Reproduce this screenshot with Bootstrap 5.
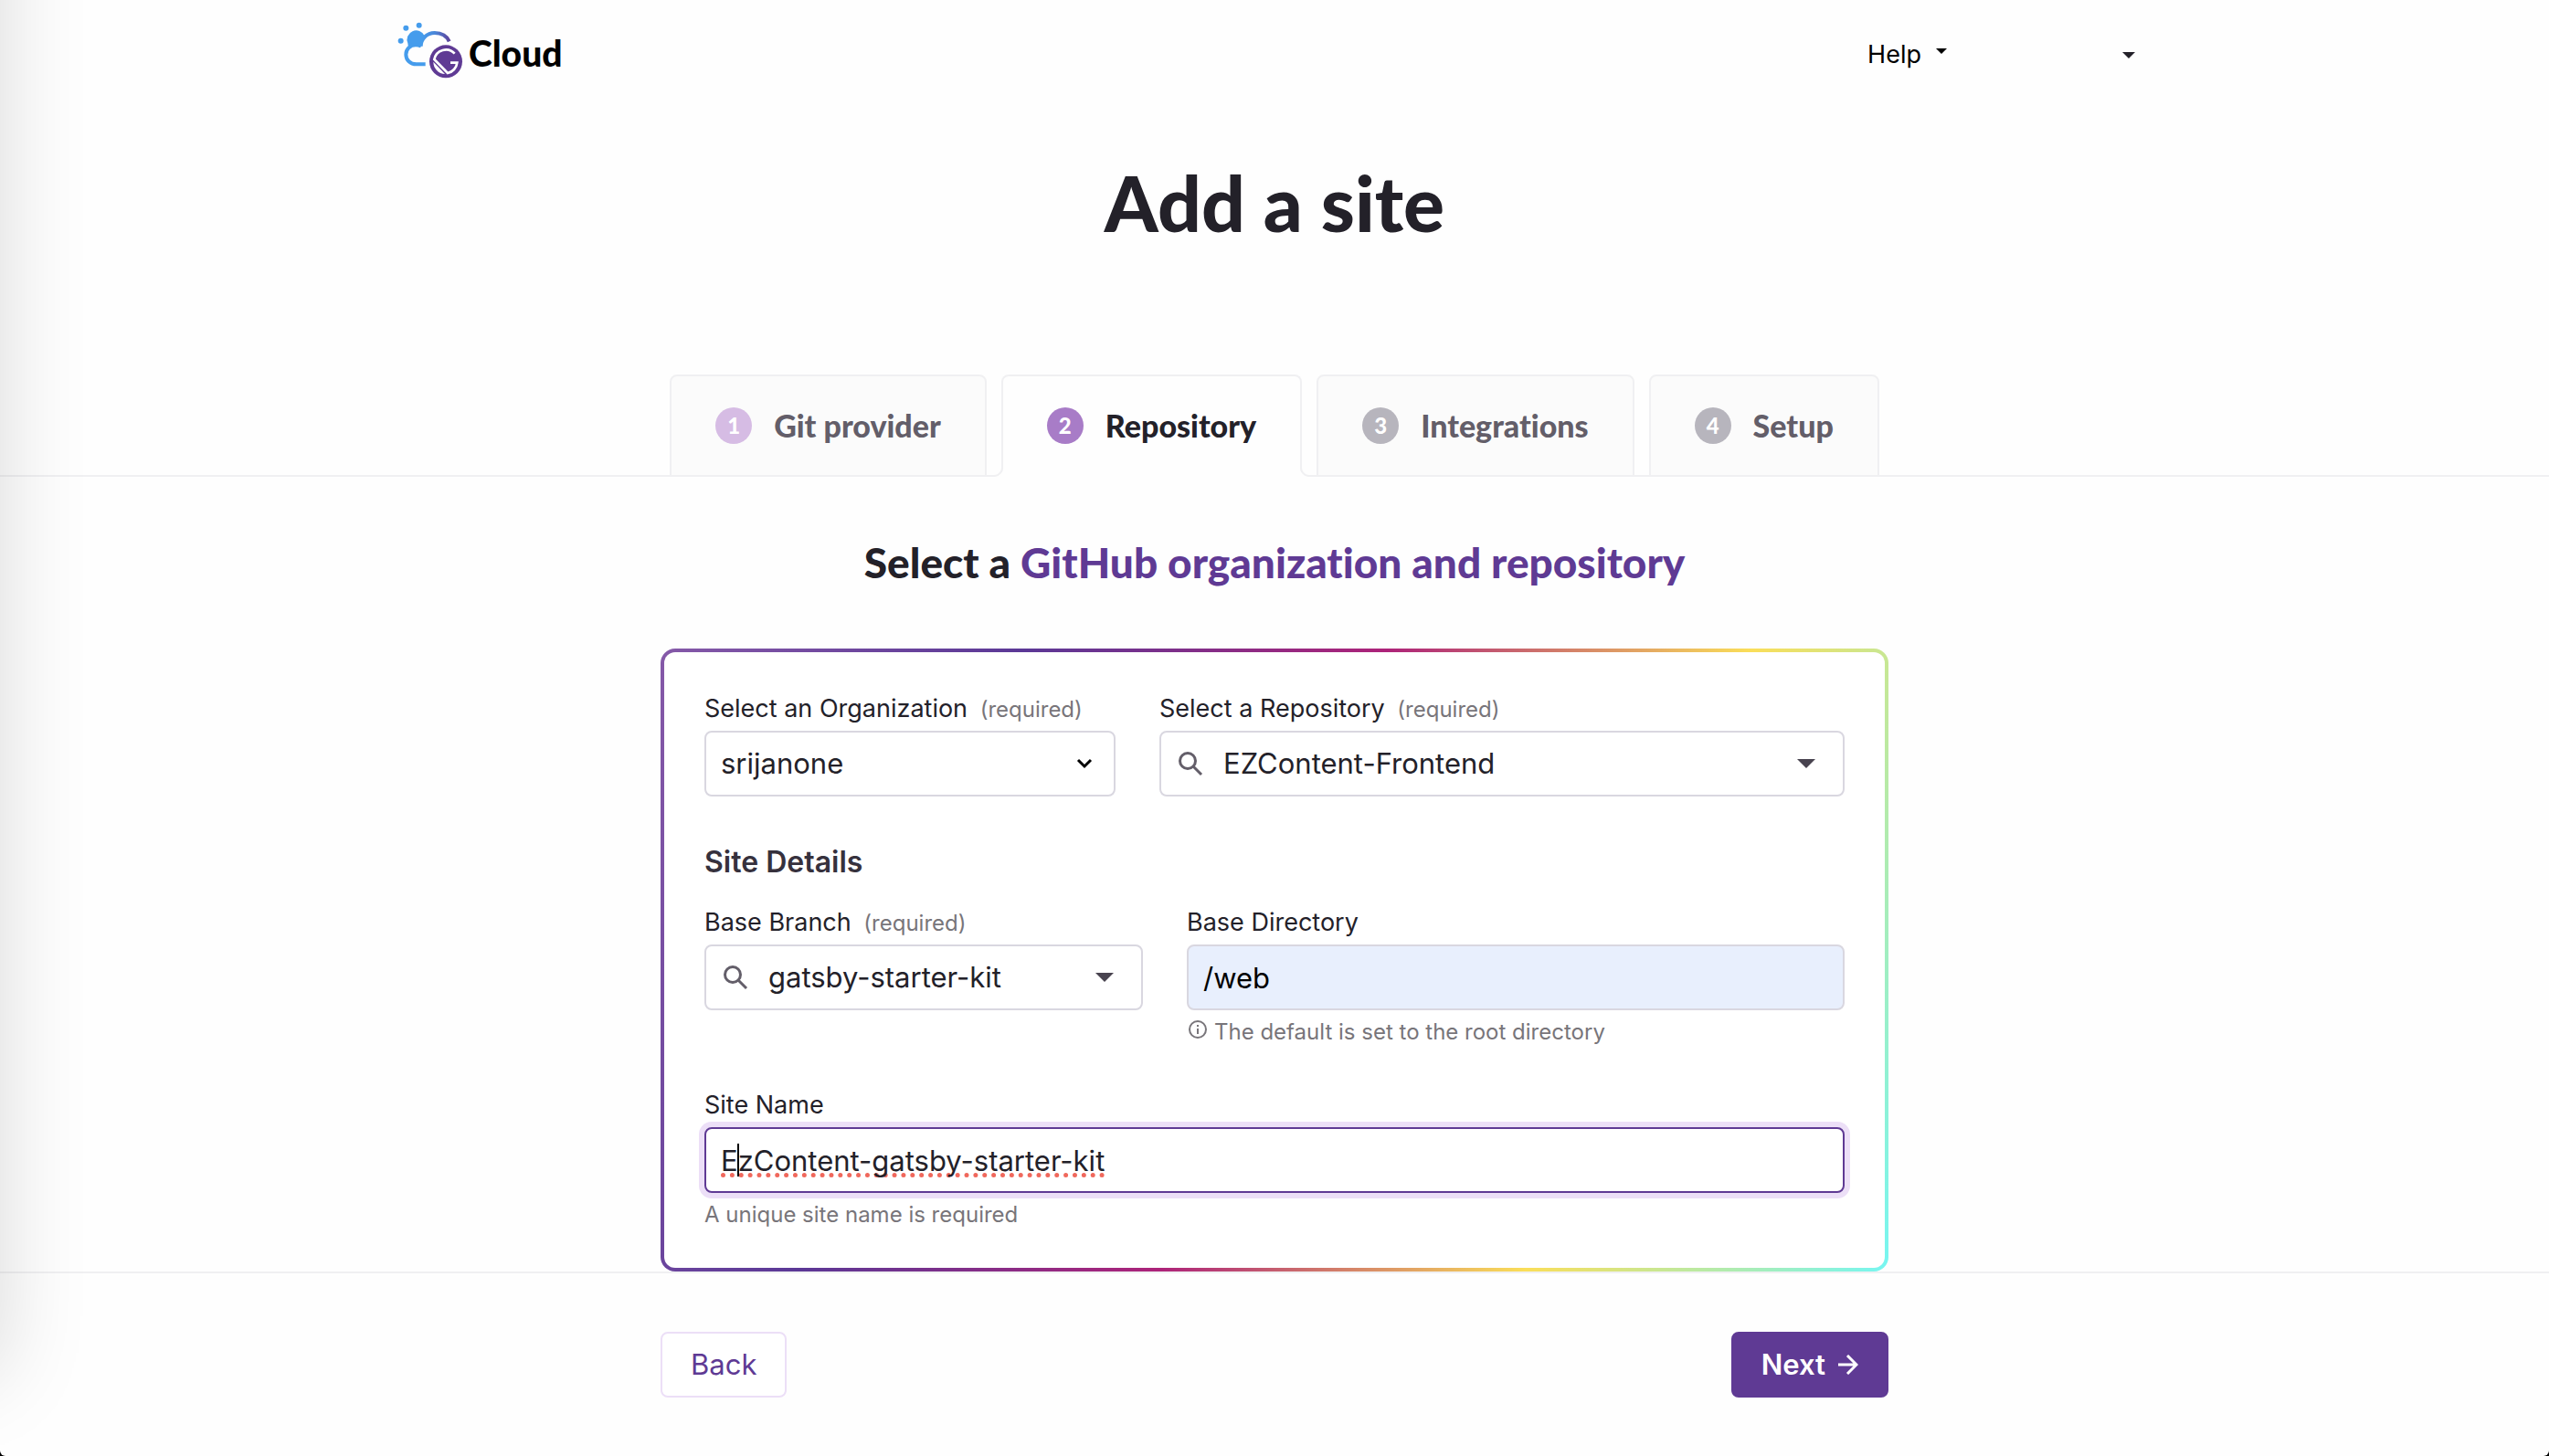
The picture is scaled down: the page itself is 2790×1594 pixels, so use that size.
<!DOCTYPE html>
<html lang="en">
<head>
<meta charset="utf-8">
<meta name="viewport" content="width=device-width, initial-scale=1">
<title>Add a site - Cloud</title>
<link href="https://cdn.jsdelivr.net/npm/bootstrap@5.3.0/dist/css/bootstrap.min.css" rel="stylesheet">
<style>
:root{--paper:#fefefe;--line:#f0f0f2;--ink:#232129;--muted:#78757a;--edge:#d9d7e0;--brand:#5f3a94;--soft:#ecdff7}
html{background:#000}
body{font-family:Inter,"Liberation Sans",sans-serif;color:var(--ink);background:none;font-size:27px;line-height:36px}
.page{background:var(--paper);border-radius:0 0 6px 6px;position:relative;overflow:hidden}
.edge-shade{position:absolute;left:-400px;width:400px;top:-200px;bottom:90px;box-shadow:0 0 90px rgba(0,0,0,.15);pointer-events:none}
.brand-type{font-family:Lato,"Liberation Sans",sans-serif;font-variant-ligatures:none}
.wide{width:100%;max-width:1920px}
.narrow{width:100%;max-width:1344px}
.site-head{padding:22px 0 24px}
.logo-link{color:#000;font-size:39px;font-weight:900;line-height:48px;gap:6px}
.logo-link svg{width:72px;height:66px}
.logo-link span{padding-top:6px}
.head-nav{padding-top:10px}
.head-menu{border:0;background:none;padding:0;color:#000;gap:16px}
.account{padding:0 18px;width:224px}
.page-title{font-size:84px;font-weight:900;line-height:96px;margin:62px 0 140px}
.steps{border-bottom:2px solid var(--line)}
.steps ol{gap:16px;margin:0 0 -2px;padding:0;list-style:none}
.step{height:112px;padding:0 48px;gap:24px;border:2px solid var(--line);border-radius:8px 8px 0 0;background:#fbfbfb;color:#635e69;font-size:34px;font-weight:900;line-height:44px;text-decoration:none;position:relative}
.step-num{width:40px;height:40px;border-radius:50%;background:#b7b5bd;color:#fff;font-size:24px;font-weight:900;line-height:40px;text-align:center}
.step-done .step-num{background:#d6bce4}
.step-now{background:var(--paper);border-bottom-color:var(--paper);color:var(--ink)}
.step-now .step-num{background:#a87cc7}
.step-now::before,.step-now::after{content:"";position:absolute;bottom:-2px;width:12px;height:14px;border:0 solid var(--line);border-bottom-width:2px}
.step-now::before{right:100%;border-right-width:2px;border-bottom-right-radius:10px;box-shadow:2px 2px 0 1px var(--paper);clip-path:inset(0 -4px -4px 0)}
.step-now::after{left:100%;border-left-width:2px;border-bottom-left-radius:10px;box-shadow:-2px 2px 0 1px var(--paper);clip-path:inset(0 0 -4px -4px)}
.sub-title{font-size:46px;font-weight:900;line-height:56px;margin:66px 0;color:var(--ink)}
.accent{color:var(--brand)}
.panel{border:4px solid transparent;border-radius:16px;padding:44px 44px 42px;background:linear-gradient(#fff,#fff) padding-box,linear-gradient(110deg,#8559a8,#5b3896 25%,#ad2379 50%,#fade59 75%,#76f6f2) border-box}
.pair{display:grid;gap:48px}
.pair-org{grid-template-columns:minmax(0,3fr) minmax(0,5fr)}
.pair-dir{grid-template-columns:minmax(0,2fr) minmax(0,3fr);margin-top:28px}
.cap-text{display:block;margin-bottom:6px}
.req{font-size:24px;line-height:24px;color:var(--muted);margin-left:6px}
.field{height:72px;width:100%;border:2px solid var(--edge);border-radius:8px;background-color:#fff;color:var(--ink);font-size:31px;line-height:40px;padding:0 16px}
.field input{min-width:0;border:0;outline:0;background:none;color:inherit;padding:0 0 0 22px}
.combo{padding:0 30px 0 18px}
.combo svg{flex:none}
.combo button{border:0;background:none;padding:0;line-height:0}
.pick{appearance:none;background-image:url("data:image/svg+xml,%3Csvg xmlns='http://www.w3.org/2000/svg' viewBox='0 0 18 12'%3E%3Cpath d='M2 2l7 7 7-7' fill='none' stroke='%23000' stroke-width='3'/%3E%3C/svg%3E");background-repeat:no-repeat;background-size:18px 12px;background-position:right 23px center}
.filled{background:#e8effd;color:#000}
.focused{border-color:var(--brand);box-shadow:0 0 0 6px var(--soft);outline:0;text-decoration:underline dotted #f0685c 5px;text-underline-offset:2px;text-decoration-skip-ink:none}
.text-caret{position:absolute;left:36px;top:18px;width:2px;height:36px;background:#000}
.hint{font-size:24px;line-height:32px;color:var(--muted);margin:8px 0 0}
.hint svg{margin-right:6px;vertical-align:0}
.group-title{font-size:32px;font-weight:600;line-height:40px;margin:52px 0 0;color:#36313d}
.name-row{margin-top:46px}
.actions{border-top:2px solid var(--line);padding:64px 0}
.act{height:72px;border-radius:8px;font-size:31px;line-height:40px;padding:0 31px}
.act-back{border:2px solid var(--soft);color:var(--brand);background:#fff}
.act-next{background:var(--brand);border:2px solid var(--brand);color:#fff;font-weight:600;gap:14px}
</style>
<script src="https://cdn.jsdelivr.net/npm/bootstrap@5.3.0/dist/js/bootstrap.bundle.min.js"></script>
</head>
<body>
<div class="page min-vh-100">
  <header class="site-head wide mx-auto d-flex justify-content-between align-items-center">
    <a href="#" class="logo-link brand-type d-flex align-items-center text-decoration-none">
      <svg viewBox="45 38 216 198" aria-hidden="true">
        <defs><linearGradient id="arc" x1="125" y1="0" x2="222" y2="0" gradientUnits="userSpaceOnUse"><stop offset="0" stop-color="#459cec"/><stop offset=".45" stop-color="#4b86d8"/><stop offset="1" stop-color="#5f3a94"/></linearGradient></defs>
        <g fill="#459cec"><circle cx="116" cy="55" r="9"/><circle cx="73" cy="64" r="9"/><circle cx="56" cy="106" r="9"/>
        <path d="M79 114a29 29 0 0 1 55-24c-8 10-12 20-13 38-12-7-28-9-39-2-2-4-3-8-3-12z"/></g>
        <path d="M137 183h-30c-20 0-34-14-34-32s14-31 32-31c7 0 12 1 17 3" fill="none" stroke="#459cec" stroke-width="12"/>
        <path d="M122 124c0-25 20-44 45-44 24 0 40 10 48 28" fill="none" stroke="url(#arc)" stroke-width="12"/>
        <circle cx="204" cy="174" r="54" fill="#5f3a94"/>
        <path d="M233 148a39 39 0 0 0-67 19l44 45a39 39 0 0 0 31-34h-22" fill="none" stroke="#fff" stroke-width="8"/>
        <path d="M163 175c0 22 17 39 38 40z" fill="#fff"/>
      </svg>
      <span>Cloud</span>
    </a>
    <nav class="head-nav d-flex align-items-center" aria-label="Account">
      <button type="button" class="head-menu d-flex align-items-center">Help
        <svg width="12" height="6" viewBox="0 0 12 6" aria-hidden="true" class="mb-2"><path d="M0 0h12L6 6z"/></svg></button>
      <button type="button" class="head-menu account d-flex justify-content-end" aria-label="Account menu">
        <svg width="14" height="7" viewBox="0 0 14 7" aria-hidden="true"><path d="M0 0h14L7 7z" fill="#232129"/></svg></button>
    </nav>
  </header>

  <main>
    <h1 class="page-title brand-type text-center">Add a site</h1>
    <nav class="steps brand-type" aria-label="Steps">
      <ol class="d-flex justify-content-center">
        <li><a href="#" class="step step-done d-flex align-items-center"><span class="step-num">1</span>Git provider</a></li>
        <li><a href="#" class="step step-now d-flex align-items-center" aria-current="step"><span class="step-num">2</span>Repository</a></li>
        <li><a href="#" class="step d-flex align-items-center"><span class="step-num">3</span>Integrations</a></li>
        <li><a href="#" class="step d-flex align-items-center"><span class="step-num">4</span>Setup</a></li>
      </ol>
    </nav>

    <h2 class="sub-title brand-type text-center">Select a <span class="accent">GitHub organization and repository</span></h2>

    <form id="site" class="panel narrow mx-auto">
      <div class="pair pair-org">
        <div>
          <label class="cap-text" for="org">Select an Organization <span class="req">(required)</span></label>
          <select id="org" class="field pick"><option>srijanone</option></select>
        </div>
        <div>
          <label class="cap-text" for="repo">Select a Repository <span class="req">(required)</span></label>
          <div class="field combo d-flex align-items-center">
            <svg width="28" height="28" viewBox="0 0 28 28" fill="none" stroke="#635e69" stroke-width="3" aria-hidden="true"><circle cx="11" cy="11" r="8.5"/><path d="M17 17l9 9"/></svg>
            <input id="repo" type="text" class="flex-fill" value="EZContent-Frontend">
            <button type="button" aria-label="Show repositories"><svg width="20" height="10" viewBox="0 0 20 10"><path d="M0 0h20L10 10z" fill="#48434f"/></svg></button>
          </div>
        </div>
      </div>

      <h3 class="group-title">Site Details</h3>
      <div class="pair pair-dir">
        <div>
          <label class="cap-text" for="branch">Base Branch <span class="req">(required)</span></label>
          <div class="field combo d-flex align-items-center">
            <svg width="28" height="28" viewBox="0 0 28 28" fill="none" stroke="#635e69" stroke-width="3" aria-hidden="true"><circle cx="11" cy="11" r="8.5"/><path d="M17 17l9 9"/></svg>
            <input id="branch" type="text" class="flex-fill" value="gatsby-starter-kit">
            <button type="button" aria-label="Show branches"><svg width="20" height="10" viewBox="0 0 20 10"><path d="M0 0h20L10 10z" fill="#48434f"/></svg></button>
          </div>
        </div>
        <div>
          <label class="cap-text" for="dir">Base Directory</label>
          <input id="dir" type="text" class="field filled" value="/web">
          <p class="hint"><svg width="24" height="22" viewBox="0 0 24 22" fill="none" stroke="#78757a" stroke-width="2" aria-hidden="true"><circle cx="12" cy="11" r="9"/><path d="M12 10v6M12 6v2"/></svg>The default is set to the root directory</p>
        </div>
      </div>

      <div class="name-row">
        <label class="cap-text" for="name">Site Name</label>
        <div class="position-relative">
          <input id="name" type="text" class="field focused" value="EzContent-gatsby-starter-kit" spellcheck="false">
          <span class="text-caret" aria-hidden="true"></span>
        </div>
        <p class="hint">A unique site name is required</p>
      </div>
    </form>
  </main>

  <footer class="actions">
    <div class="narrow mx-auto d-flex justify-content-between">
      <button type="button" class="act act-back">Back</button>
      <button type="submit" form="site" class="act act-next d-flex align-items-center">Next
        <svg width="22" height="22" viewBox="0 0 22 22" fill="none" stroke="#fff" stroke-width="3" aria-hidden="true"><path d="M0 11h20M10 1l10 10-10 10"/></svg></button>
    </div>
  </footer>
  <div class="edge-shade"></div>
</div>
</body>
</html>
